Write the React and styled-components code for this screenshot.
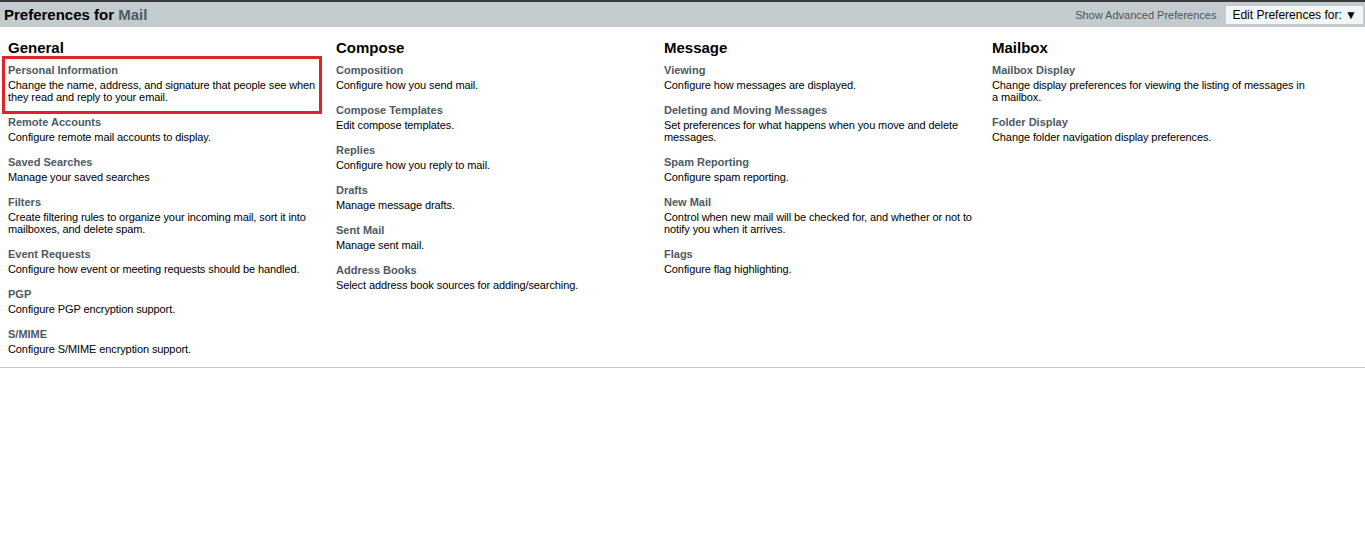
import React from "react";
import styled, { createGlobalStyle } from "styled-components";

const G = createGlobalStyle`
  body { margin: 0; font-family: Arial, "Liberation Sans", sans-serif; background: #fff; }
`;
const Header = styled.div`
  height: 25px; background: #c4cbce; border-top: 2px solid #3a3a3a;
  display: flex; align-items: center; justify-content: space-between; padding: 0 4px;
`;
const Title = styled.div`font-size: 15px; font-weight: bold; color: #000; span { color: #4d5a63; }`;
const Right = styled.div`display: flex; align-items: center; gap: 10px; font-size: 11px; color: #4a555c;`;
const Select = styled.div`
  background: #f4f5f5; color: #000; font-size: 12px; padding: 2px 6px; height: 14px; line-height: 14px;
  margin-right: -2px;
`;
const Grid = styled.div`
  display: grid; grid-template-columns: repeat(4, 328px); padding: 12px 0 0 8px;
  border-bottom: 1px solid #c8c8c8;
`;
const Col = styled.div`display: flex; flex-direction: column;`;
const H = styled.div`font-size: 15px; font-weight: bold; color: #000; margin-bottom: 7px;`;
const Item = styled.div`
  position: relative; margin-bottom: 10px; width: 318px;
  ${p => p.$hl && `&::after{content:"";position:absolute;left:-6px;top:-7px;width:314px;height:52px;border:3px solid #e3212b;}`}
`;
const IT = styled.div`font-size: 11px; font-weight: bold; color: #4d5a63; line-height: 14px;`;
const ID = styled.div`font-size: 11px; color: #000; line-height: 12px; margin-top: 2px; margin-bottom: 2px; letter-spacing: -0.1px;`;

const data = [
  ["General", [
    ["Personal Information", "Change the name, address, and signature that people see when they read and reply to your email."],
    ["Remote Accounts", "Configure remote mail accounts to display."],
    ["Saved Searches", "Manage your saved searches"],
    ["Filters", "Create filtering rules to organize your incoming mail, sort it into mailboxes, and delete spam."],
    ["Event Requests", "Configure how event or meeting requests should be handled."],
    ["PGP", "Configure PGP encryption support."],
    ["S/MIME", "Configure S/MIME encryption support."],
  ]],
  ["Compose", [
    ["Composition", "Configure how you send mail."],
    ["Compose Templates", "Edit compose templates."],
    ["Replies", "Configure how you reply to mail."],
    ["Drafts", "Manage message drafts."],
    ["Sent Mail", "Manage sent mail."],
    ["Address Books", "Select address book sources for adding/searching."],
  ]],
  ["Message", [
    ["Viewing", "Configure how messages are displayed."],
    ["Deleting and Moving Messages", "Set preferences for what happens when you move and delete messages."],
    ["Spam Reporting", "Configure spam reporting."],
    ["New Mail", "Control when new mail will be checked for, and whether or not to notify you when it arrives."],
    ["Flags", "Configure flag highlighting."],
  ]],
  ["Mailbox", [
    ["Mailbox Display", "Change display preferences for viewing the listing of messages in a mailbox."],
    ["Folder Display", "Change folder navigation display preferences."],
  ]],
];

export default function App() {
  return (
    <>
      <G />
      <Header>
        <Title>Preferences for <span>Mail</span></Title>
        <Right>Show Advanced Preferences<Select>Edit Preferences for: ▼</Select></Right>
      </Header>
      <Grid>
        {data.map(([h, items], ci) => (
          <Col key={h}>
            <H>{h}</H>
            {items.map(([t, d], i) => (
              <Item key={t} $hl={ci === 0 && i === 0}>
                <IT>{t}</IT><ID>{d}</ID>
              </Item>
            ))}
          </Col>
        ))}
      </Grid>
    </>
  );
}
